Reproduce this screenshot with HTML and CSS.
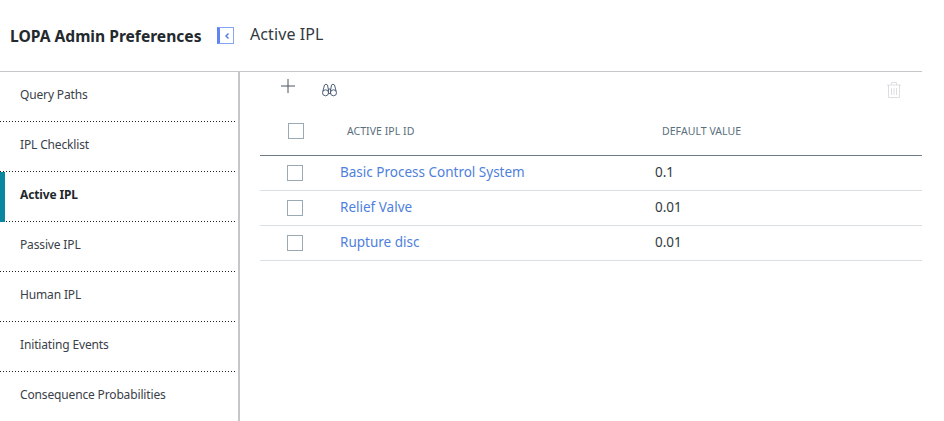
FILE: index.html
```html
<!DOCTYPE html>
<html lang="en">
<head>
<meta charset="utf-8">
<title>LOPA Admin Preferences</title>
<link rel="stylesheet" href="styles.css">
</head>
<body>
<div class="page">
  <header class="top">
    <h1 class="app-title">LOPA Admin Preferences</h1>
    <button class="collapse" aria-label="Collapse">
      <svg width="8" height="8" viewBox="0 0 8 8"><path d="M5.500 1.500 3 4l2.500 2.500" fill="none" stroke="#5b7fe0" stroke-width="1.500"/></svg>
    </button>
    <h2 class="page-title">Active IPL</h2>
  </header>
  <div class="main">
    <nav class="side">
      <a class="item">Query Paths</a>
      <a class="item">IPL Checklist</a>
      <a class="item active">Active IPL</a>
      <a class="item">Passive IPL</a>
      <a class="item">Human IPL</a>
      <a class="item">Initiating Events</a>
      <a class="item last">Consequence Probabilities</a>
    </nav>
    <section class="content">
      <div class="tools">
        <svg class="plus" width="14" height="14" viewBox="0 0 14 14"><path d="M7 0v14M0 7h14" stroke="#4a5560" stroke-width="1"/></svg>
        <svg class="binoc" width="15" height="14" viewBox="0 0 15 14" fill="none" stroke="#4f6078" stroke-width="1"><circle cx="3.500" cy="9.800" r="3"/><circle cx="11.500" cy="9.800" r="3"/><path d="M.8 8.500 2.500 2Q4 .3 5.500 2L6.500 7.500M14.200 8.500 12.500 2Q11 .3 9.500 2L8.500 7.500M6.500 6h2V10.500h-2z"/></svg>
        <svg class="trash" width="14" height="16" viewBox="0 0 14 16" fill="none" stroke="#dcdfe2" stroke-width="1"><path d="M0 3h14M1.500 3v12.500h11V3M4.500 3V.5h5V3M4.500 6v7M7 6v7M9.500 6v7"/></svg>
      </div>
      <div class="head row-grid">
        <span class="cell-check head-check"><span class="box"></span></span>
        <span class="h-id">ACTIVE IPL ID</span>
        <span class="h-val">DEFAULT VALUE</span>
      </div>
      <div class="row row-grid">
        <span class="cell-check"><span class="box"></span></span>
        <a class="link">Basic Process Control System</a>
        <span class="val">0.1</span>
      </div>
      <div class="row row-grid">
        <span class="cell-check"><span class="box"></span></span>
        <a class="link">Relief Valve</a>
        <span class="val">0.01</span>
      </div>
      <div class="row row-grid">
        <span class="cell-check"><span class="box"></span></span>
        <a class="link">Rupture disc</a>
        <span class="val">0.01</span>
      </div>
    </section>
  </div>
</div>
</body>
</html>
```
FILE: styles.css
```css
* { box-sizing: border-box; }
html, body { margin: 0; padding: 0; background: #fff; }
body { font-family: "Noto Sans", "Open Sans", sans-serif; color: #2b3138; }
.page { width: 944px; height: 421px; overflow: hidden; padding-right: 22px; }
.top { height: 72px; border-bottom: 1px solid #c4c6c9; display: flex; align-items: center; padding: 0 0 0 10px; }
.app-title { margin: 0; font-size: 15.600px; font-weight: 700; color: #24292e; width: 207px; white-space: nowrap; }
.collapse { width: 17px; height: 17px; padding: 0; background: #fff; border: 1px solid #86a6f5; border-left: 3px solid #5f86f0; display: flex; align-items: center; justify-content: center; margin-right: 16px; }
.page-title { margin: 0 0 3px; font-size: 16px; font-weight: 400; color: #333a40; letter-spacing: 0.1px; }
.main { display: flex; height: 349px; }
.side { width: 240px; flex: none; border-right: 2px solid #c4c6c9; }
.item { display: flex; align-items: center; height: 50px; padding: 0 0 5px 20px; font-size: 12px; letter-spacing: -0.150px; color: #3a4148; margin-right: 1px; background-image: linear-gradient(90deg, #222 1px, transparent 1px); background-size: 3px 1px; background-position: left bottom; background-repeat: repeat-x; }
.item.active { font-weight: 700; color: #22272c; box-shadow: inset 5px 0 0 #0a86a0; }
.item.last { background-image: none; }
.content { flex: 1; padding-left: 20px; }
.tools { height: 45px; display: flex; align-items: flex-start; padding-top: 7px; }
.plus { margin-left: 21px; }
.binoc { margin-left: 27px; margin-top: 4px; }
.trash { margin-left: auto; margin-right: 21px; margin-top: 3px; }
.row-grid { display: grid; grid-template-columns: 80px 315px 1fr; align-items: center; }
.head { height: 39px; border-bottom: 1px solid #6e7b88; padding-bottom: 11px; font-size: 10.500px; color: #5a6f7c; }
.h-id { padding-left: 7px; letter-spacing: 0.050px; }
.h-val { padding-left: 7px; letter-spacing: 0.050px; }
.row { height: 35px; border-bottom: 1px solid #d9dfe3; font-size: 13.500px; padding-bottom: 3px; }
.cell-check { padding-left: 27px; display: flex; }
.head-check { padding-left: 28px; }
.box { width: 16px; height: 16px; border: 1px solid #9aa9b2; background: #fff; display: block; }
.row .box { margin-top: 3px; }
.link { color: #4f7fdc; white-space: nowrap; }
.val { color: #333a40; }
```
